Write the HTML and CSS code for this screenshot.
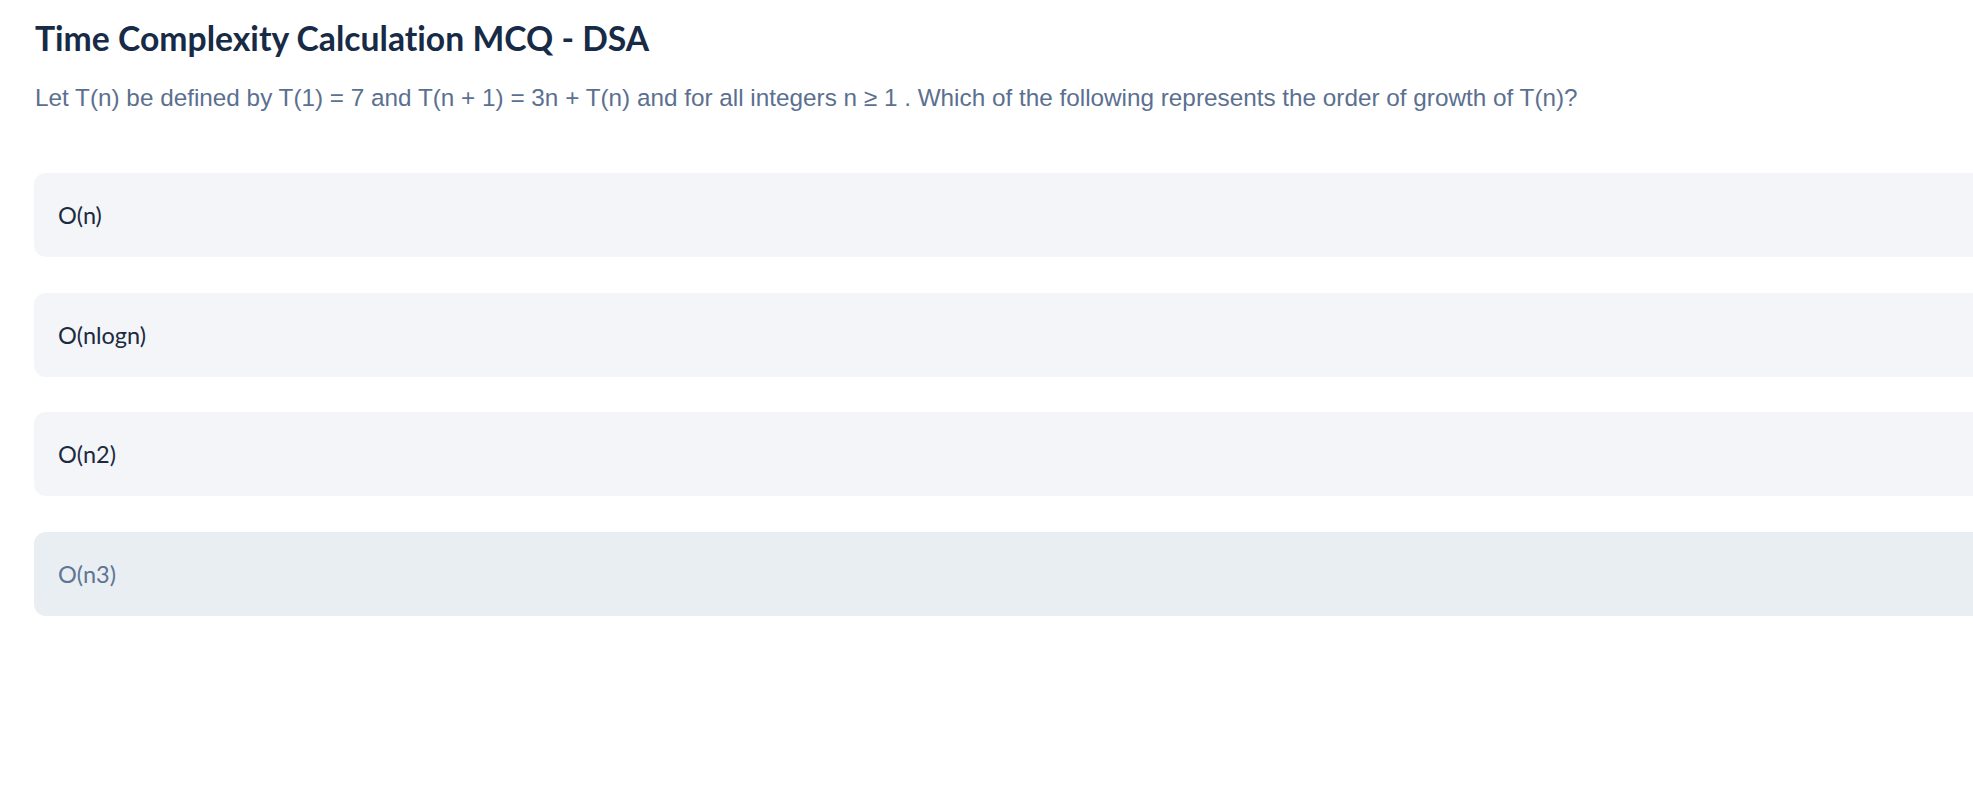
FILE: index.html
```html
<!DOCTYPE html>
<html lang="en">
<head>
<meta charset="utf-8">
<title>Time Complexity Calculation MCQ - DSA</title>
<link rel="stylesheet" href="styles.css">
</head>
<body>
<main class="quiz">
  <h1 class="quiz-title">Time Complexity Calculation MCQ - DSA</h1>
  <p class="quiz-question">Let T(n) be defined by T(1) = 7 and T(n + 1) = 3n + T(n) and for all integers n ≥ 1 . Which of the following represents the order of growth of T(n)?</p>
  <ul class="options">
    <li class="option">O(n)</li>
    <li class="option">O(nlogn)</li>
    <li class="option">O(n2)</li>
    <li class="option option-muted">O(n3)</li>
  </ul>
</main>
</body>
</html>
```
FILE: styles.css
```css
html, body {
  margin: 0;
  padding: 0;
  background: #ffffff;
  overflow: hidden;
}

.quiz {
  padding: 18px 0 0 34px;
}

.quiz-title {
  margin: 0 0 0 1px;
  font-family: Lato, "Liberation Sans", sans-serif;
  font-weight: 700;
  font-size: 33.7px;
  line-height: 40px;
  color: #172a46;
  font-variant-ligatures: none;
}

.quiz-question {
  margin: 26px 0 0 1px;
  font-family: "Liberation Sans", Arial, sans-serif;
  font-size: 24.3px;
  line-height: 28px;
  color: #5b7090;
}

.options {
  list-style: none;
  margin: 61px 0 0 0;
  padding: 0;
  width: 2100px;
  display: flex;
  flex-direction: column;
  gap: 35.5px;
}

.option {
  height: 84px;
  display: flex;
  align-items: center;
  padding: 0 24px;
  border-radius: 12px;
  background: #f3f5f9;
  font-family: Lato, "Liberation Sans", sans-serif;
  font-size: 23.5px;
  color: #1c2a40;
  font-variant-ligatures: none;
}

.option-muted {
  background: #e9eef3;
  color: #5e7594;
}
```
